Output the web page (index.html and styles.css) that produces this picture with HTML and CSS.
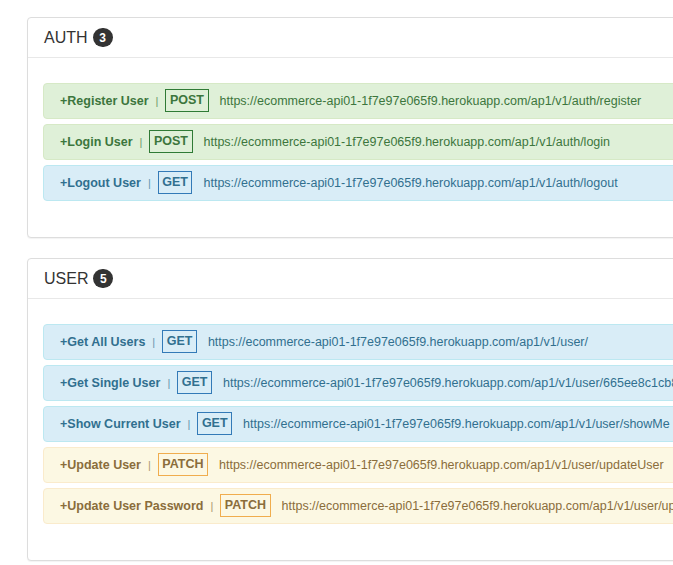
FILE: index.html
```html
<!DOCTYPE html>
<html>
<head>
<meta charset="utf-8">
<link rel="stylesheet" href="styles.css">
</head>
<body>
<div class="page">
  <section class="panel">
    <div class="panel-heading">AUTH<span class="badge">3</span></div>
    <div class="panel-body">
      <div class="route success"><b class="name">+Register User</b><span class="sep">|</span><span class="method post">POST</span><span class="url">https://ecommerce-api01-1f7e97e065f9.herokuapp.com/ap1/v1/auth/register</span></div>
      <div class="route success"><b class="name">+Login User</b><span class="sep">|</span><span class="method post">POST</span><span class="url">https://ecommerce-api01-1f7e97e065f9.herokuapp.com/ap1/v1/auth/login</span></div>
      <div class="route info"><b class="name">+Logout User</b><span class="sep">|</span><span class="method get">GET</span><span class="url">https://ecommerce-api01-1f7e97e065f9.herokuapp.com/ap1/v1/auth/logout</span></div>
    </div>
  </section>
  <section class="panel">
    <div class="panel-heading">USER<span class="badge">5</span></div>
    <div class="panel-body">
      <div class="route info"><b class="name">+Get All Users</b><span class="sep">|</span><span class="method get">GET</span><span class="url">https://ecommerce-api01-1f7e97e065f9.herokuapp.com/ap1/v1/user/</span></div>
      <div class="route info"><b class="name">+Get Single User</b><span class="sep">|</span><span class="method get">GET</span><span class="url">https://ecommerce-api01-1f7e97e065f9.herokuapp.com/ap1/v1/user/665ee8c1cb8a2f</span></div>
      <div class="route info"><b class="name">+Show Current User</b><span class="sep">|</span><span class="method get">GET</span><span class="url">https://ecommerce-api01-1f7e97e065f9.herokuapp.com/ap1/v1/user/showMe</span></div>
      <div class="route warning"><b class="name">+Update User</b><span class="sep">|</span><span class="method patch">PATCH</span><span class="url">https://ecommerce-api01-1f7e97e065f9.herokuapp.com/ap1/v1/user/updateUser</span></div>
      <div class="route warning"><b class="name">+Update User Password</b><span class="sep">|</span><span class="method patch">PATCH</span><span class="url">https://ecommerce-api01-1f7e97e065f9.herokuapp.com/ap1/v1/user/updateUserPassword</span></div>
    </div>
  </section>
</div>
</body>
</html>
```

FILE: styles.css
```css
html, body {
  margin: 0;
  padding: 0;
  overflow: hidden;
  background: #fff;
}
body {
  font-family: "Liberation Sans", Arial, sans-serif;
  font-size: 12.5px;
  color: #333;
}
.page {
  padding: 17px 0 0 27px;
  width: 760px;
}
.panel {
  border: 1px solid #ddd;
  border-radius: 4px;
  box-shadow: 0 1px 1px rgba(0,0,0,0.05);
  background: #fff;
  margin-bottom: 20px;
}
.panel-heading {
  height: 39px;
  border-bottom: 1px solid #e8e8e8;
  display: flex;
  align-items: center;
  padding-left: 16px;
  font-size: 16px;
  color: #333;
}
.badge {
  display: inline-flex;
  align-items: center;
  justify-content: center;
  width: 20px;
  height: 19px;
  border-radius: 10px;
  background: #333;
  color: #fff;
  font-size: 12px;
  font-weight: bold;
  margin-left: 5px;
}
.panel-body {
  padding: 25px 0 36px 15px;
  display: flex;
  flex-direction: column;
  gap: 5px;
}
.route {
  display: flex;
  align-items: center;
  height: 36px;
  box-sizing: border-box;
  padding: 0 16px;
  border: 1px solid;
  border-radius: 4px;
  white-space: nowrap;
}
.name {
  font-weight: bold;
}
.sep {
  margin: 0 7px;
  opacity: 0.7;
  font-size: 11px;
}
.method {
  font-weight: bold;
  border: 1px solid;
  padding: 0 3.5px;
  height: 21px;
  line-height: 21px;
  margin-top: -1px;
}
.url {
  margin-left: 11px;
}
.success {
  background: #dff0d8;
  border-color: #d6e9c6;
  color: #3c763d;
}
.info {
  background: #d9edf7;
  border-color: #bce8f1;
  color: #31708f;
}
.warning {
  background: #fcf8e3;
  border-color: #faebcc;
  color: #8a6d3b;
}
.post { border-color: #2f7a35; }
.get { border-color: #337ab7; }
.patch { border-color: #f0ad4e; }
```
